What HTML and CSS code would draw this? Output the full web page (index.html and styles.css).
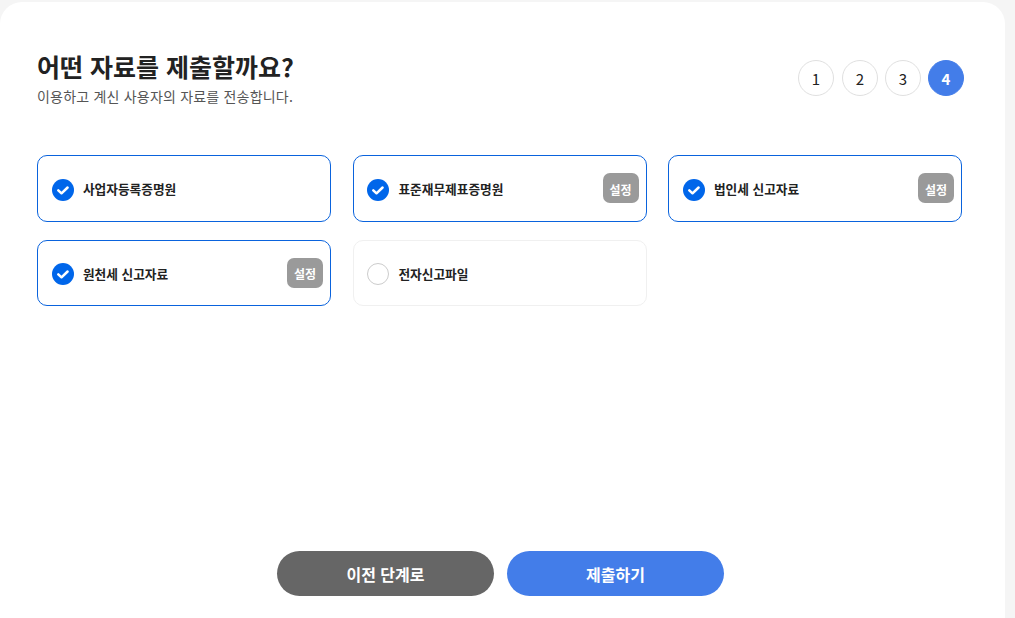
FILE: index.html
```html
<!DOCTYPE html>
<html lang="ko">
<head>
<meta charset="utf-8">
<title>자료 제출</title>
<link rel="stylesheet" href="styles.css">
</head>
<body>
<main class="panel">
  <header class="head">
    <div class="head-text">
      <h1 class="title">어떤 자료를 제출할까요?</h1>
      <p class="subtitle">이용하고 계신 사용자의 자료를 전송합니다.</p>
    </div>
    <ol class="steps">
      <li class="step">1</li>
      <li class="step">2</li>
      <li class="step">3</li>
      <li class="step step-active">4</li>
    </ol>
  </header>
  <section class="grid">
    <div class="item item-on">
      <svg class="check" viewBox="0 0 22 22"><circle cx="11" cy="11" r="11" fill="#0066ea"/><path d="M6.3 11.3l3.2 3 6.1-5.8" fill="none" stroke="#fff" stroke-width="2.5" stroke-linecap="round" stroke-linejoin="round"/></svg>
      <span class="label">사업자등록증명원</span>
    </div>
    <div class="item item-on">
      <svg class="check" viewBox="0 0 22 22"><circle cx="11" cy="11" r="11" fill="#0066ea"/><path d="M6.3 11.3l3.2 3 6.1-5.8" fill="none" stroke="#fff" stroke-width="2.5" stroke-linecap="round" stroke-linejoin="round"/></svg>
      <span class="label">표준재무제표증명원</span>
      <button class="setting">설정</button>
    </div>
    <div class="item item-on">
      <svg class="check" viewBox="0 0 22 22"><circle cx="11" cy="11" r="11" fill="#0066ea"/><path d="M6.3 11.3l3.2 3 6.1-5.8" fill="none" stroke="#fff" stroke-width="2.5" stroke-linecap="round" stroke-linejoin="round"/></svg>
      <span class="label">법인세 신고자료</span>
      <button class="setting">설정</button>
    </div>
    <div class="item item-on">
      <svg class="check" viewBox="0 0 22 22"><circle cx="11" cy="11" r="11" fill="#0066ea"/><path d="M6.3 11.3l3.2 3 6.1-5.8" fill="none" stroke="#fff" stroke-width="2.5" stroke-linecap="round" stroke-linejoin="round"/></svg>
      <span class="label">원천세 신고자료</span>
      <button class="setting">설정</button>
    </div>
    <div class="item">
      <span class="radio"></span>
      <span class="label">전자신고파일</span>
    </div>
  </section>
  <footer class="actions">
    <button class="btn btn-prev">이전 단계로</button>
    <button class="btn btn-next">제출하기</button>
  </footer>
</main>
</body>
</html>
```
FILE: styles.css
```css
* { box-sizing: border-box; }
html, body { height: 100%; }
body {
  margin: 0;
  background: #f5f5f5;
  font-family: "Noto Sans CJK KR", "Noto Sans", sans-serif;
  color: #222;
  overflow: hidden;
}
.panel {
  width: 1005px;
  height: 616px;
  margin-top: 2px;
  padding: 46px 41px 0 37px;
  background: #fff;
  border-radius: 22px 22px 0 0;
  display: flex;
  flex-direction: column;
}
.head {
  display: flex;
  justify-content: space-between;
  align-items: flex-start;
  height: 107px;
}
.title {
  margin: 0;
  font-size: 25px;
  line-height: 36px;
  font-weight: 700;
  color: #222;
}
.subtitle {
  margin: 2px 0 0;
  font-size: 14px;
  line-height: 20px;
  font-weight: 400;
  letter-spacing: 0.2px;
  color: #555;
}
.steps {
  list-style: none;
  margin: 12px 0 0;
  padding: 0;
  display: flex;
  gap: 7px;
}
.step {
  width: 36px;
  height: 36px;
  border: 1px solid #e0e0e0;
  border-radius: 50%;
  display: flex;
  align-items: center;
  justify-content: center;
  font-size: 15px;
  color: #222;
}
.step:first-child { margin-right: 1px; }
.step-active {
  background: #437de9;
  border-color: #437de9;
  color: #fff;
  font-weight: 700;
}
.grid {
  display: grid;
  grid-template-columns: repeat(3, 294px);
  column-gap: 21.5px;
  row-gap: 18px;
  grid-auto-rows: 66.5px;
  width: 925px;
}
.item {
  display: flex;
  align-items: center;
  gap: 9px;
  padding: 0 7px 0 13.9px;
  border: 1px solid #f0f0f0;
  border-radius: 10px;
  background: #fff;
}
.item-on { border-color: #0a63dd; }
.check, .radio {
  width: 22px;
  height: 22px;
  flex: none;
  margin-top: 3px;
}
.radio {
  border: 1px solid #ccc;
  border-radius: 50%;
}
.label {
  flex: 1;
  margin-top: 1px;
  font-size: 12.7px;
  font-weight: 700;
  color: #222;
}
.setting {
  width: 36px;
  height: 30px;
  padding: 2px 0 0;
  border: 0;
  border-radius: 7px;
  background: #9a9a9a;
  color: #fff;
  font: 700 12px "Noto Sans CJK KR", sans-serif;
}
.actions {
  margin-top: 245px;
  display: flex;
  justify-content: center;
  gap: 13px;
}
.btn {
  width: 217px;
  height: 45px;
  border: 0;
  border-radius: 23px;
  color: #fff;
  font: 700 16px "Noto Sans CJK KR", sans-serif;
}
.btn-prev { background: #666; }
.btn-next { background: #437de9; }
```
